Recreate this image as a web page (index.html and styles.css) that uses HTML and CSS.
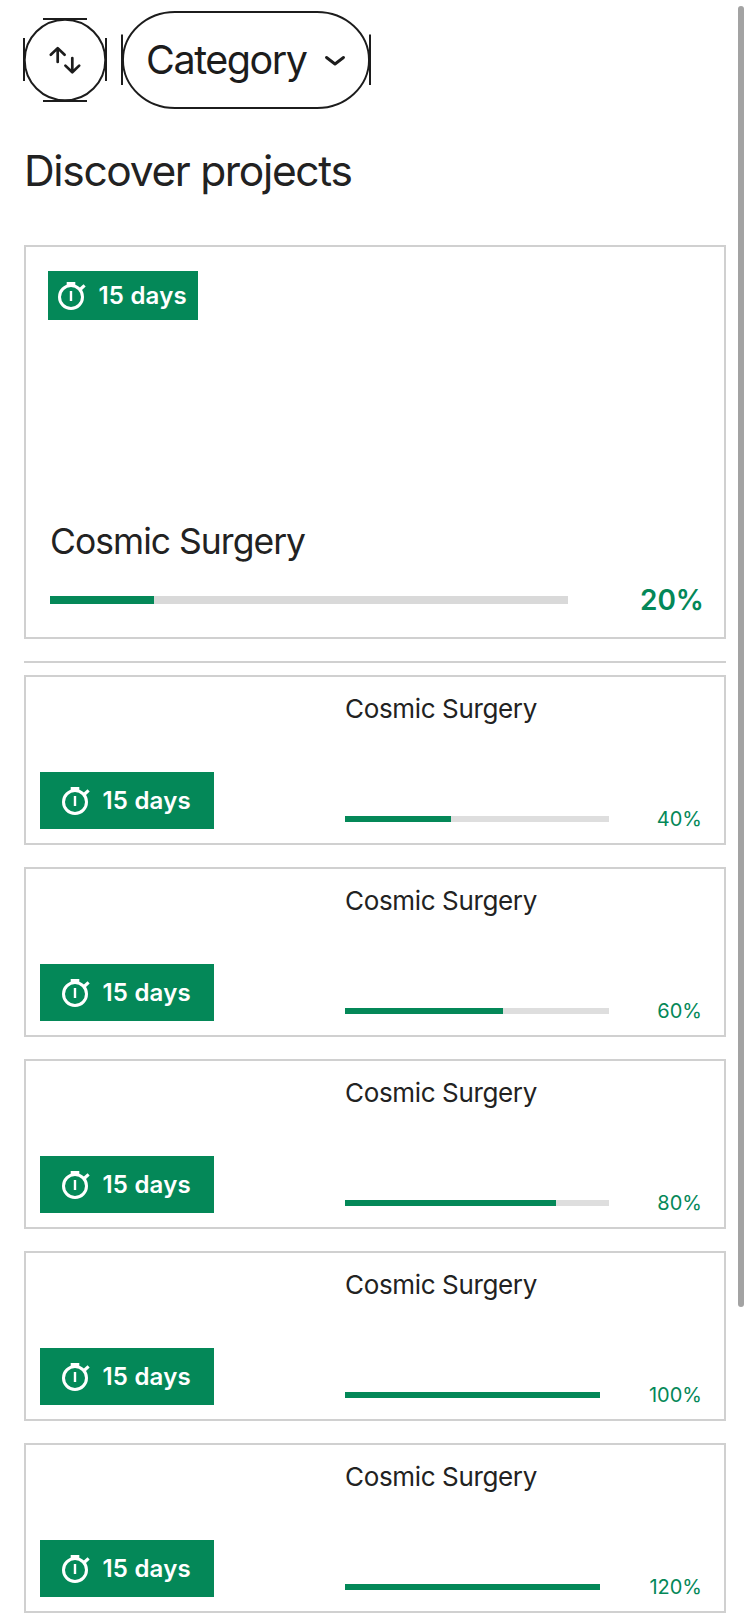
FILE: index.html
```html
<!DOCTYPE html>
<html lang="en">
<head>
<meta charset="utf-8">
<title>Discover projects</title>
<link rel="stylesheet" href="styles.css">
</head>
<body>
<svg class="defs" aria-hidden="true">
  <symbol id="timer" viewBox="0 0 30 30">
    <circle cx="14" cy="16" r="11.5" fill="none" stroke="#fff" stroke-width="3"/>
    <path d="M9.7 2.1h8.6M9.7 3.2h8.6M14 10v10" fill="none" stroke="#fff" stroke-width="2.4"/>
    <path d="M22.6 9 27.6 4.4" fill="none" stroke="#fff" stroke-width="3.2"/>
  </symbol>
</svg>
<main class="page">
  <div class="filters">
    <button class="sort" aria-label="Sort">
      <svg width="84" height="84" viewBox="0 0 84 84" fill="none" stroke="#1c1c1c" stroke-width="2">
        <path d="M1 20v43M83 20v43M20 1h44M20 83h44"/>
        <circle cx="42" cy="42" r="40.3"/>
        <path d="M34.7 44V31M27.8 36.8l6.9-6.7 6.9 6.7M49.3 40v14M42.4 47.6l6.9 6.7 6.9-6.7" stroke-width="2.7" stroke-linecap="round" stroke-linejoin="round"/>
      </svg>
    </button>
    <button class="category">
      <svg class="outline" width="250" height="98" viewBox="0 0 250 98" fill="none" stroke="#1c1c1c" stroke-width="2">
        <path d="M1 23.500v50.500M249 23.500v50.500"/>
        <path d="M54 1A52 48 0 0 0 54 97H196A52 48 0 0 0 196 1Z" stroke-width="1.9"/>
      </svg>
      <span>Category</span>
      <svg class="chevron" width="22" height="12" viewBox="0 0 22 12" fill="none" stroke="#1c1c1c" stroke-width="2.9" stroke-linecap="round" stroke-linejoin="round"><path d="M2.500 2.500 11 9l8.500-6.500"/></svg>
    </button>
  </div>
  <h1 class="heading">Discover projects</h1>
  <article class="feature">
    <div class="badge"><svg class="timer"><use href="#timer"/></svg><span>15 days</span></div>
    <h2 class="feature-name">Cosmic Surgery</h2>
    <div class="funding"><div class="track"><div class="fill" style="width:20%"></div></div><span class="percent">20%</span></div>
  </article>
  <hr class="rule">
  <section class="list">
    <article class="card"><div class="badge wide"><svg class="timer"><use href="#timer"/></svg><span>15 days</span></div><div class="info"><h3 class="name">Cosmic Surgery</h3><div class="funding"><div class="track"><div class="fill" style="width:40%"></div></div><span class="percent">40%</span></div></div></article>
    <article class="card"><div class="badge wide"><svg class="timer"><use href="#timer"/></svg><span>15 days</span></div><div class="info"><h3 class="name">Cosmic Surgery</h3><div class="funding"><div class="track"><div class="fill" style="width:60%"></div></div><span class="percent">60%</span></div></div></article>
    <article class="card"><div class="badge wide"><svg class="timer"><use href="#timer"/></svg><span>15 days</span></div><div class="info"><h3 class="name">Cosmic Surgery</h3><div class="funding"><div class="track"><div class="fill" style="width:80%"></div></div><span class="percent">80%</span></div></div></article>
    <article class="card"><div class="badge wide"><svg class="timer"><use href="#timer"/></svg><span>15 days</span></div><div class="info"><h3 class="name">Cosmic Surgery</h3><div class="funding full"><div class="track"><div class="fill" style="width:100%"></div></div><span class="percent">100%</span></div></div></article>
    <article class="card"><div class="badge wide"><svg class="timer"><use href="#timer"/></svg><span>15 days</span></div><div class="info"><h3 class="name">Cosmic Surgery</h3><div class="funding full"><div class="track"><div class="fill" style="width:100%"></div></div><span class="percent">120%</span></div></div></article>
  </section>
</main>
<div class="scrollbar"></div>
</body>
</html>
```
FILE: styles.css
```css
* { box-sizing: border-box; }
body { margin: 0; background: #fff; color: #222; font-family: Inter, "Liberation Sans", sans-serif; height: 1624px; overflow: hidden; }
.defs { position: absolute; width: 0; height: 0; }
.page { padding: 11px 24px 0; }
h1, h2, h3 { margin: 0; font-weight: 400; white-space: nowrap; }
svg { display: block; flex: none; }
.filters { display: flex; align-items: flex-start; gap: 14px; height: 98px; margin-left: -1px; }
.sort, .category { border: 0; background: none; padding: 0; color: #1c1c1c; font-family: inherit; }
.sort { margin-top: 7px; width: 84px; height: 84px; }
.category { position: relative; width: 250px; height: 98px; display: flex; align-items: center; justify-content: space-between; padding: 0 25px 0 25px; font-size: 39.5px; letter-spacing: -1.45px; }
.category span { padding-bottom: 1px; }
.chevron { margin-top: 1px; }
.outline { position: absolute; inset: 0; }
.heading { margin-top: 36px; height: 52px; line-height: 52px; font-size: 42.5px; letter-spacing: -1.33px; }
.feature { margin-top: 48px; height: 394px; border: 2px solid #d0d0d0; padding: 24px 22px 0; display: flex; flex-direction: column; }
.badge { width: 150px; height: 49px; flex: none; background: #048858; color: #fff; display: flex; align-items: center; gap: 11.5px; padding-left: 9px; font-size: 24px; font-weight: 600; letter-spacing: 0.2px; white-space: nowrap; }
.timer { width: 30px; height: 30px; }
.feature-name { margin: 199px 0 0 2px; height: 46px; line-height: 46px; font-size: 35.5px; letter-spacing: -0.98px; }
.funding { display: flex; align-items: center; justify-content: space-between; color: #048858; }
.feature .funding { margin: 19px -2px 0 2px; height: 32px; font-size: 28px; font-weight: 600; }
.track { width: 518px; height: 8px; background: #d9d9d9; }
.fill { height: 100%; background: #048858; }
.rule { margin: 22px 0 12px; border: 0; height: 2px; background: #d0d0d0; }
.list { display: flex; flex-direction: column; gap: 22px; }
.card { height: 170px; border: 2px solid #d0d0d0; padding: 14px 22px 14px 14px; display: flex; justify-content: space-between; align-items: flex-end; }
.wide { width: 174px; height: 57px; padding-left: 21px; }
.info { width: 357px; height: 100%; display: flex; flex-direction: column; justify-content: space-between; }
.name { height: 36px; line-height: 36px; font-size: 26px; letter-spacing: -0.35px; }
.card .funding { height: 20px; font-size: 20px; }
.card .track { width: 264px; height: 6px; background: #dedede; }
.card .full .track { width: 255px; }
.scrollbar { position: absolute; left: 738px; top: 6px; width: 6px; height: 1301px; border-radius: 3px; background: #a3a3a3; }
```
